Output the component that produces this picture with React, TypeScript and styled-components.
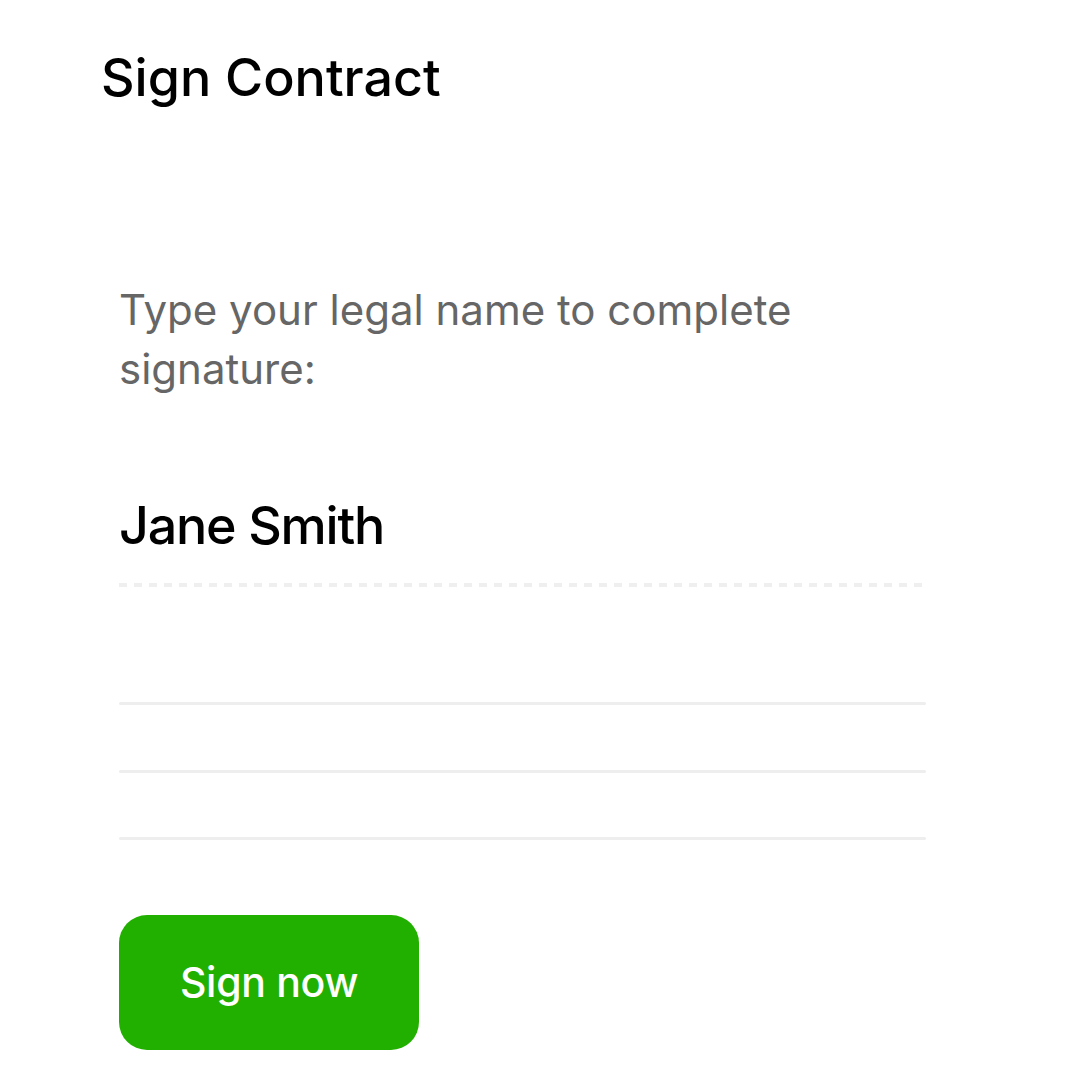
import styled, { createGlobalStyle } from "styled-components";

const GlobalStyle = createGlobalStyle`
  html, body {
    margin: 0;
    padding: 0;
    background: #ffffff;
  }
  body {
    font-family: Inter, "Noto Sans", sans-serif;
    color: #000000;
  }
`;

const Page = styled.div`
  display: flex;
  flex-direction: column;
  padding: 48px 0 0 101px;
`;

const Title = styled.h1`
  margin: 0;
  font-size: 52px;
  line-height: 60px;
  font-weight: 500;
  letter-spacing: 0;
`;

const Body = styled.div`
  display: flex;
  flex-direction: column;
  width: 807px;
  margin: 172px 0 0 18px;
`;

const Prompt = styled.p`
  margin: 0;
  font-size: 42px;
  line-height: 59px;
  font-weight: 400;
  color: #666666;
  letter-spacing: 0;
`;

const Name = styled.div`
  margin-top: 98px;
  font-size: 52px;
  line-height: 60px;
  font-weight: 500;
  letter-spacing: -1.2px;
`;

const DashedRule = styled.div`
  margin-top: 27px;
  height: 4px;
  background-image: linear-gradient(to right, #efefef 0 8px, transparent 8px 15px);
  background-size: 15px 4px;
`;

const Rule = styled.div<{ $gap: number }>`
  margin-top: ${(p) => p.$gap}px;
  height: 3px;
  background: #eeeeee;
  border-radius: 2px;
`;

const SignButton = styled.button`
  margin-top: 75px;
  width: 300px;
  height: 135px;
  border: none;
  border-radius: 28px;
  background: #22b000;
  color: #ffffff;
  font-family: inherit;
  font-size: 41px;
  font-weight: 500;
  letter-spacing: -0.3px;
  padding-bottom: 2px;
  cursor: pointer;
`;

export default function App() {
  return (
    <>
      <GlobalStyle />
      <Page>
        <Title>Sign Contract</Title>
        <Body>
          <Prompt>
            Type your legal name to complete
            <br />
            signature:
          </Prompt>
          <Name>Jane Smith</Name>
          <DashedRule />
          <Rule $gap={115} />
          <Rule $gap={65} />
          <Rule $gap={64} />
          <SignButton>Sign now</SignButton>
        </Body>
      </Page>
    </>
  );
}
